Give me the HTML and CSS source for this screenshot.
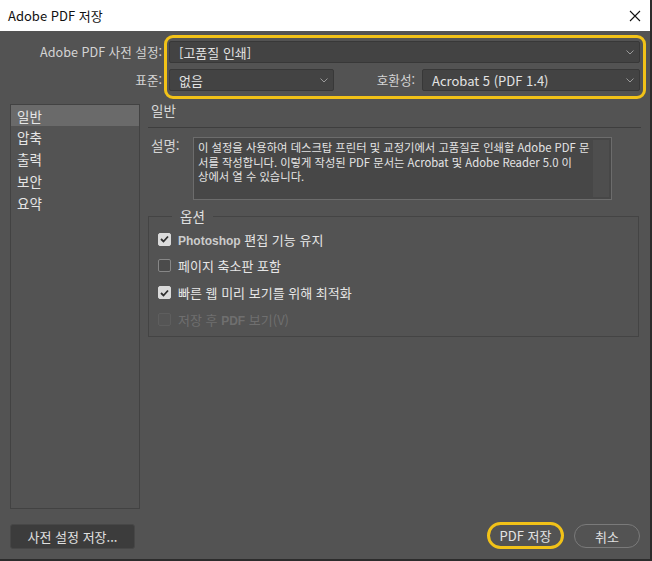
FILE: index.html
```html
<!DOCTYPE html>
<html lang="ko">
<head>
<meta charset="utf-8">
<title>Adobe PDF 저장</title>
<link rel="stylesheet" href="styles.css">
</head>
<body>
<div class="window">
  <div class="titlebar">
    <span class="title">Adobe PDF 저장</span>
    <svg class="close" width="12" height="12" viewBox="0 0 12 12"><path d="M1 1 L11 11 M11 1 L1 11" stroke="#111" stroke-width="1.1" fill="none"/></svg>
  </div>

  <div class="preset">
    <div class="labels">
      <div class="lbl">Adobe PDF 사전 설정:</div>
      <div class="lbl">표준:</div>
    </div>
    <div class="highlight">
      <div class="select full"><span>[고품질 인쇄]</span><svg class="chev" width="8" height="5" viewBox="0 0 8 5"><path d="M0.5 0.5 L4 4 L7.5 0.5" stroke="#9a9a9a" fill="none"/></svg></div>
      <div class="row2">
        <div class="select std"><span>없음</span><svg class="chev" width="8" height="5" viewBox="0 0 8 5"><path d="M0.5 0.5 L4 4 L7.5 0.5" stroke="#9a9a9a" fill="none"/></svg></div>
        <div class="lbl compat">호환성:</div>
        <div class="select acro"><span>Acrobat 5 (PDF 1.4)</span><svg class="chev" width="8" height="5" viewBox="0 0 8 5"><path d="M0.5 0.5 L4 4 L7.5 0.5" stroke="#9a9a9a" fill="none"/></svg></div>
      </div>
    </div>
  </div>

  <div class="main">
    <ul class="list">
      <li class="sel">일반</li>
      <li>압축</li>
      <li>출력</li>
      <li>보안</li>
      <li>요약</li>
    </ul>
    <div class="panel">
      <div class="heading">일반</div>
      <div class="desc-row">
        <div class="desc-label">설명:</div>
        <div class="desc-box">
          <div class="desc-text">이 설정을 사용하여 데스크탑 프린터 및 교정기에서 고품질로 인쇄할 Adobe PDF 문<br>서를 작성합니다. 이렇게 작성된 PDF 문서는 Acrobat 및 Adobe Reader 5.0 이<br>상에서 열 수 있습니다.</div>
          <div class="scroll"></div>
        </div>
      </div>
      <fieldset class="options">
        <legend>옵션</legend>
        <div class="opt"><span class="cb checked"><svg width="9" height="8" viewBox="0 0 9 8"><path d="M1 4 L3.5 6.5 L8 1.5" stroke="#2e2e2e" stroke-width="1.8" fill="none"/></svg></span><span class="otext"><b class="lat">Photoshop</b> 편집 기능 유지</span></div>
        <div class="opt"><span class="cb"></span><span class="otext">페이지 축소판 포함</span></div>
        <div class="opt"><span class="cb checked"><svg width="9" height="8" viewBox="0 0 9 8"><path d="M1 4 L3.5 6.5 L8 1.5" stroke="#2e2e2e" stroke-width="1.8" fill="none"/></svg></span><span class="otext">빠른 웹 미리 보기를 위해 최적화</span></div>
        <div class="opt disabled"><span class="cb"></span><span class="otext">저장 후 <b class="lat">PDF</b> 보기(V)</span></div>
      </fieldset>
    </div>
  </div>

  <div class="footer">
    <button class="btn save-preset">사전 설정 저장...</button>
    <div class="spacer"></div>
    <button class="btn pill primary">PDF 저장</button>
    <button class="btn pill cancel">취소</button>
  </div>
</div>
</body>
</html>
```

FILE: styles.css
```css
html, body {
  margin: 0;
  padding: 0;
  background: #535353;
}
body {
  font-family: "Noto Sans CJK KR", "Noto Sans", sans-serif;
  font-size: 13px;
  color: #dedede;
}
.window {
  width: 652px;
  height: 561px;
  box-sizing: border-box;
  background: #535353;
  border-right: 2px solid #2c2c2c;
  border-bottom: 2px solid #2c2c2c;
  display: flex;
  flex-direction: column;
}
.titlebar {
  height: 31px;
  flex: none;
  background: #ffffff;
  display: flex;
  align-items: center;
  padding: 0 9px 0 8px;
}
.title {
  flex: 1;
  color: #111;
  font-size: 13px;
  line-height: 16px;
}
.close {
  display: block;
  margin-top: 1px;
}

/* preset area */
.preset {
  display: flex;
  margin-top: 4px;
  margin-right: 4px;
  flex: none;
}
.labels {
  width: 164px;
  padding: 6px 2px 0 0;
  display: flex;
  flex-direction: column;
  gap: 6px;
  box-sizing: border-box;
}
.lbl {
  height: 22px;
  line-height: 22px;
  text-align: right;
  color: #d4d4d4;
  font-size: 12.6px;
  white-space: nowrap;
}
.highlight {
  flex: 1;
  border: 3px solid #f2c218;
  border-radius: 9px;
  padding: 3px 3px 5px 2px;
  display: flex;
  flex-direction: column;
  gap: 6px;
}
.select {
  height: 22px;
  box-sizing: border-box;
  background: #434343;
  border: 1px solid #383838;
  border-radius: 2px;
  display: flex;
  align-items: center;
  padding: 0 5px 0 9px;
  color: #e2e2e2;
  font-size: 13px;
}
.select span {
  flex: 1;
  white-space: nowrap;
}
.chev { display: block; }
.row2 {
  display: flex;
}
.select.std { width: 165px; }
.compat {
  flex: 1;
  padding-right: 7px;
}
.select.acro { width: 218px; }

/* main area */
.main {
  flex: 1;
  display: flex;
  margin-top: 5px;
  padding: 0 9px 0 10px;
  min-height: 0;
}
.list {
  list-style: none;
  margin: 0;
  padding: 0;
  width: 130px;
  box-sizing: border-box;
  border: 1px solid #424242;
  flex: none;
}
.list li {
  height: 22px;
  line-height: 22px;
  padding-left: 6px;
  color: #e6e6e6;
  font-size: 13.5px;
}
.list li.sel {
  background: #6a6a6a;
  height: 21px;
}
.panel {
  flex: 1;
  margin-left: 8px;
  display: flex;
  flex-direction: column;
}
.heading {
  height: 23px;
  line-height: 13px;
  padding-left: 3px;
  border-bottom: 1px solid #3e3e3e;
  color: #d8d8d8;
  font-size: 13.5px;
}
.desc-row {
  display: flex;
  margin-top: 9px;
}
.desc-label {
  width: 42px;
  padding-left: 3px;
  line-height: 16px;
  color: #d4d4d4;
  font-size: 13.5px;
}
.desc-box {
  width: 419px;
  height: 63px;
  box-sizing: border-box;
  border: 1px solid #6c6c6c;
  background: #474747;
  display: flex;
}
.desc-text {
  flex: 1;
  padding: 2px 0 0 4px;
  font-size: 11.3px;
  line-height: 14.5px;
  color: #e4e4e4;
  white-space: nowrap;
  overflow: hidden;
}
.scroll {
  width: 16px;
  margin: 2px 2px 2px 0;
  background: #4e4e4e;
}

.options {
  margin: 8px 2px 0 0;
  padding: 2px 0 3px 9px;
  border: 1px solid #444444;
  min-width: 0;
}
.options legend {
  margin-left: 14px;
  padding: 0 8px;
  font-size: 13.5px;
  line-height: 16px;
  color: #e0e0e0;
}
.opt {
  height: 26.67px;
  display: flex;
  align-items: center;
  gap: 7px;
}
.cb {
  width: 13px;
  height: 13px;
  box-sizing: border-box;
  border: 1px solid #878787;
  border-radius: 2px;
  background: #4b4b4b;
  display: flex;
  align-items: center;
  justify-content: center;
  flex: none;
}
.cb.checked {
  background: #dadada;
  border-color: #dadada;
}
.otext {
  color: #e6e6e6;
  font-size: 13px;
  white-space: nowrap;
}
.lat {
  font-family: "Liberation Sans", "Noto Sans", sans-serif;
  font-weight: bold;
  font-size: 12px;
  color: #cccccc;
}
.opt.disabled .cb {
  border-color: #5e5e5e;
  background: #555;
}
.opt.disabled .otext,
.opt.disabled .lat {
  color: #6f6f6f;
}

/* footer */
.footer {
  height: 50px;
  flex: none;
  box-sizing: border-box;
  padding: 4px 10px 0 10px;
  display: flex;
  align-items: center;
}
.spacer { flex: 1; }
.btn {
  font-family: "Noto Sans CJK KR", "Noto Sans", sans-serif;
  font-size: 13px;
  color: #e0e0e0;
  padding: 0;
  margin: 0;
  cursor: default;
}
.save-preset {
  width: 125px;
  height: 25px;
  background: #3c3c3c;
  border: 1px solid #474747;
  border-radius: 3px;
}
.pill {
  border-radius: 14px;
  background: transparent;
}
.primary {
  width: 77px;
  height: 27px;
  border: 3px solid #f2c218;
  margin-top: -2px;
  color: #e4e4e4;
}
.cancel {
  width: 66px;
  height: 24px;
  border: 1px solid #7a7a7a;
  margin-left: 10px;
}
```
